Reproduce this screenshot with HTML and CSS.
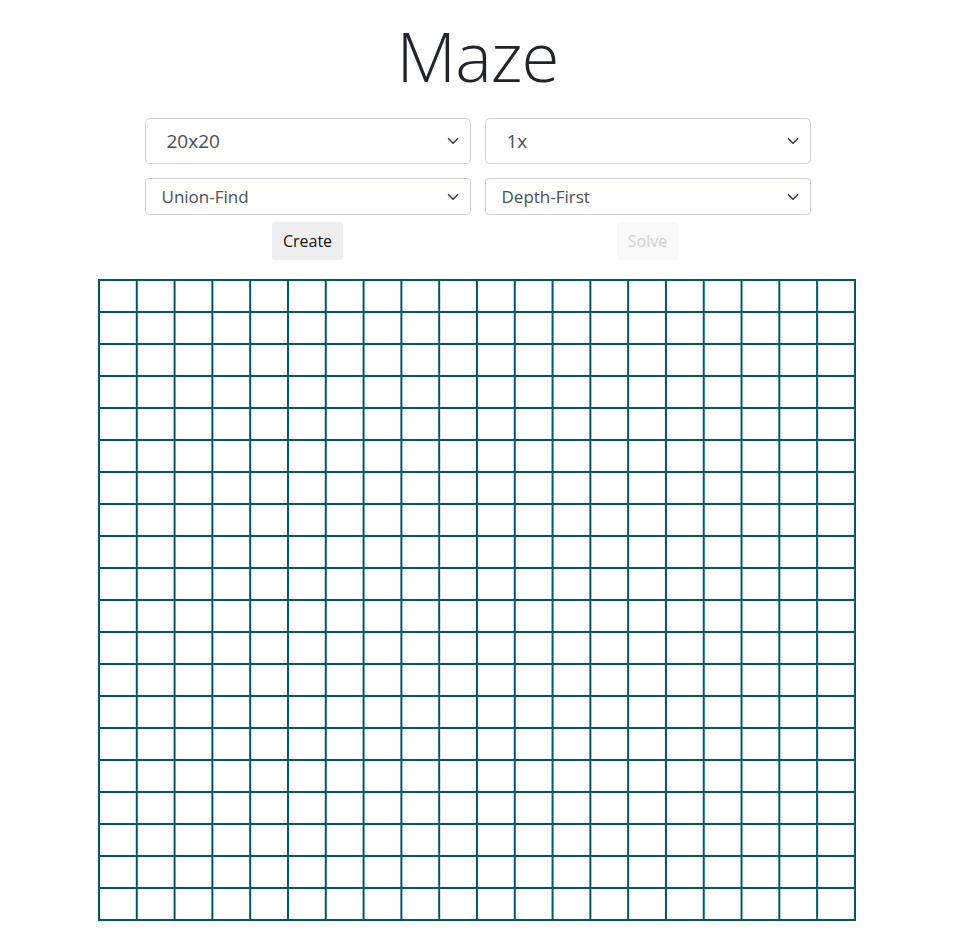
FILE: index.html
```html
<!DOCTYPE html>
<html lang="en">
<head>
<meta charset="utf-8">
<title>Maze</title>
<link rel="stylesheet" href="styles.css">
</head>
<body>
<div class="page">
  <h1 class="title">Maze</h1>
  <div class="controls">
    <div class="col">
      <div class="select-wrap lg">
        <select class="select lg"><option>20x20</option></select>
        <svg class="chev" viewBox="0 0 16 16" width="12" height="12"><path d="M2 5l6 6 6-6" fill="none" stroke="#343a40" stroke-width="2" stroke-linecap="round" stroke-linejoin="round"/></svg>
      </div>
      <div class="select-wrap">
        <select class="select"><option>Union-Find</option></select>
        <svg class="chev" viewBox="0 0 16 16" width="12" height="12"><path d="M2 5l6 6 6-6" fill="none" stroke="#343a40" stroke-width="2" stroke-linecap="round" stroke-linejoin="round"/></svg>
      </div>
      <button class="btn">Create</button>
    </div>
    <div class="col">
      <div class="select-wrap lg">
        <select class="select lg"><option>1x</option></select>
        <svg class="chev" viewBox="0 0 16 16" width="12" height="12"><path d="M2 5l6 6 6-6" fill="none" stroke="#343a40" stroke-width="2" stroke-linecap="round" stroke-linejoin="round"/></svg>
      </div>
      <div class="select-wrap">
        <select class="select"><option>Depth-First</option></select>
        <svg class="chev" viewBox="0 0 16 16" width="12" height="12"><path d="M2 5l6 6 6-6" fill="none" stroke="#343a40" stroke-width="2" stroke-linecap="round" stroke-linejoin="round"/></svg>
      </div>
      <button class="btn disabled" disabled>Solve</button>
    </div>
  </div>
  <div class="maze"></div>
</div>
</body>
</html>
```
FILE: styles.css
```css
html, body {
  margin: 0;
  padding: 0;
  background: #fff;
}
body {
  font-family: "Open Sans", "Noto Sans", "Liberation Sans", sans-serif;
  color: #212529;
}
.page {
  width: 955px;
  display: flex;
  flex-direction: column;
  align-items: center;
}
.title {
  margin: 13px 0 0;
  font-size: 69px;
  font-weight: 300;
  line-height: 84px;
  color: #212529;
  letter-spacing: -1px;
}
.controls {
  margin-top: 21px;
  display: flex;
  gap: 14px;
}
.col {
  width: 326px;
  display: flex;
  flex-direction: column;
  align-items: center;
}
.select-wrap {
  position: relative;
  width: 100%;
  margin-bottom: 14px;
}
.select {
  display: block;
  width: 100%;
  box-sizing: border-box;
  appearance: none;
  -webkit-appearance: none;
  background: #fff;
  border: 1px solid #ced4da;
  border-radius: 4px;
  font-family: inherit;
  font-size: 17px;
  color: #495057;
  height: 37px;
  padding: 0 30px 0 16px;
  margin: 0;
}
.select.lg {
  height: 46px;
  font-size: 19px;
  padding-left: 21px;
  border-radius: 5px;
}
.chev {
  position: absolute;
  right: 12px;
  top: 50%;
  margin-top: -6px;
  pointer-events: none;
}
.btn {
  margin-top: -7px;
  font-family: inherit;
  font-size: 16px;
  color: #111;
  background: #efefef;
  border: 0;
  border-radius: 3px;
  height: 38px;
  padding: 0 11px;
}
.btn.disabled {
  background: #f9f9f9;
  color: #cfcfcf;
}
.maze {
  margin-top: 19px;
  margin-right: 2px;
  width: 756px;
  height: 640px;
  border-right: 2px solid #015668;
  border-bottom: 2px solid #015668;
  background-image:
    linear-gradient(to right, #015668 2px, transparent 2px),
    linear-gradient(to bottom, #015668 2px, transparent 2px);
  background-size: 37.8px 32px;
}
```
